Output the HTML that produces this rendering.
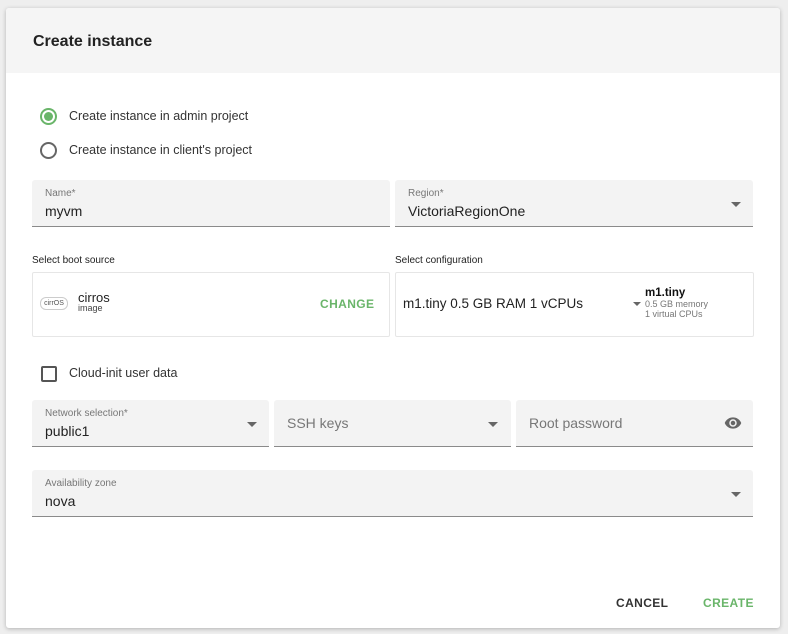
<!DOCTYPE html><html><head><style>
body{margin:0;width:788px;height:634px;background:#eeeeee;font-family:"Liberation Sans",sans-serif;position:relative;overflow:hidden}
.a{position:absolute}
.dlg{left:6px;top:8px;width:774px;height:620px;background:#fff;border-radius:3px;box-shadow:0 1px 4px rgba(0,0,0,.25)}
.hdr{left:6px;top:8px;width:774px;height:65px;background:#f5f5f5;border-radius:3px 3px 0 0}
.f{background:#f3f3f3;border-bottom:1px solid #8a8a8a;border-radius:3px 3px 0 0}
.lbl{font-size:10px;color:#777}
.val{font-size:14px;color:#222}
.ph{font-size:14px;color:#777}
.card{border:1px solid #e6e6e6;border-radius:2px;background:#fff}
.arr{width:0;height:0;border-left:5px solid transparent;border-right:5px solid transparent;border-top:5px solid #666}
</style></head><body>
<div class="a dlg"></div><div class="a hdr"></div>
<div class="a" style="left:33px;top:33px;font-size:16px;font-weight:bold;color:#222">Create instance</div>
<div class="a" style="left:40px;top:108px;width:13px;height:13px;border:2px solid #6ab56a;border-radius:50%"></div>
<div class="a" style="left:44px;top:112px;width:9px;height:9px;background:#6ab56a;border-radius:50%"></div>
<div class="a" style="left:69px;top:109px;font-size:12.5px;color:#333">Create instance in admin project</div>
<div class="a" style="left:40px;top:142px;width:13px;height:13px;border:2px solid #666;border-radius:50%"></div>
<div class="a" style="left:69px;top:143px;font-size:12.5px;color:#333">Create instance in client's project</div>
<div class="a f" style="left:32px;top:180px;width:358px;height:46px"></div>
<div class="a lbl" style="left:45px;top:188px">Name*</div>
<div class="a val" style="left:45px;top:203px">myvm</div>
<div class="a f" style="left:395px;top:180px;width:358px;height:46px"></div>
<div class="a lbl" style="left:408px;top:188px">Region*</div>
<div class="a val" style="left:408px;top:203px">VictoriaRegionOne</div>
<div class="a arr" style="left:731px;top:202px"></div>
<div class="a" style="left:32px;top:255px;font-size:10px;color:#222">Select boot source</div>
<div class="a" style="left:395px;top:255px;font-size:10px;color:#222">Select configuration</div>
<div class="a card" style="left:32px;top:272px;width:356px;height:63px"></div>
<div class="a" style="left:40px;top:297px;width:26px;height:11px;border:1px solid #ccc;border-radius:6px;font-size:7px;color:#555;text-align:center;line-height:11px">cirrOS</div>
<div class="a" style="left:78px;top:290px;font-size:13px;color:#222">cirros</div>
<div class="a" style="left:78px;top:303px;font-size:9px;color:#444">image</div>
<div class="a" style="left:320px;top:297px;font-size:12px;font-weight:bold;color:#6ab56a;letter-spacing:.4px">CHANGE</div>
<div class="a card" style="left:395px;top:272px;width:357px;height:63px"></div>
<div class="a" style="left:403px;top:296px;font-size:13.5px;color:#222">m1.tiny 0.5 GB RAM 1 vCPUs</div>
<div class="a arr" style="left:633px;top:302px;border-width:4px 4px 0 4px"></div>
<div class="a" style="left:645px;top:287px;font-size:11.5px;font-weight:bold;color:#111">m1.tiny</div>
<div class="a" style="left:645px;top:299px;font-size:9px;color:#777;line-height:10px">0.5 GB memory<br>1 virtual CPUs</div>
<div class="a" style="left:41px;top:366px;width:12px;height:12px;border:2px solid #555;border-radius:2px"></div>
<div class="a" style="left:69px;top:366px;font-size:12.5px;color:#333">Cloud-init user data</div>
<div class="a f" style="left:32px;top:400px;width:237px;height:46px"></div>
<div class="a lbl" style="left:45px;top:408px">Network selection*</div>
<div class="a val" style="left:45px;top:423px">public1</div>
<div class="a arr" style="left:247px;top:422px"></div>
<div class="a f" style="left:274px;top:400px;width:237px;height:46px"></div>
<div class="a ph" style="left:287px;top:415px">SSH keys</div>
<div class="a arr" style="left:488px;top:422px"></div>
<div class="a f" style="left:516px;top:400px;width:237px;height:46px"></div>
<div class="a ph" style="left:529px;top:415px">Root password</div>
<svg class="a" style="left:723px;top:414px" width="20" height="18" viewBox="0 0 24 24"><path fill="#666" d="M12 4.5C7 4.5 2.7 7.6 1 12c1.7 4.4 6 7.5 11 7.5s9.3-3.1 11-7.5c-1.7-4.4-6-7.5-11-7.5zM12 17a5 5 0 110-10 5 5 0 010 10zm0-8a3 3 0 100 6 3 3 0 000-6z"/></svg>
<div class="a f" style="left:32px;top:470px;width:721px;height:46px"></div>
<div class="a lbl" style="left:45px;top:478px">Availability zone</div>
<div class="a val" style="left:45px;top:493px">nova</div>
<div class="a arr" style="left:731px;top:492px"></div>
<div class="a" style="left:616px;top:596px;font-size:12px;font-weight:bold;color:#333;letter-spacing:.4px">CANCEL</div>
<div class="a" style="left:703px;top:596px;font-size:12px;font-weight:bold;color:#6ab56a;letter-spacing:.4px">CREATE</div>
</body></html>
